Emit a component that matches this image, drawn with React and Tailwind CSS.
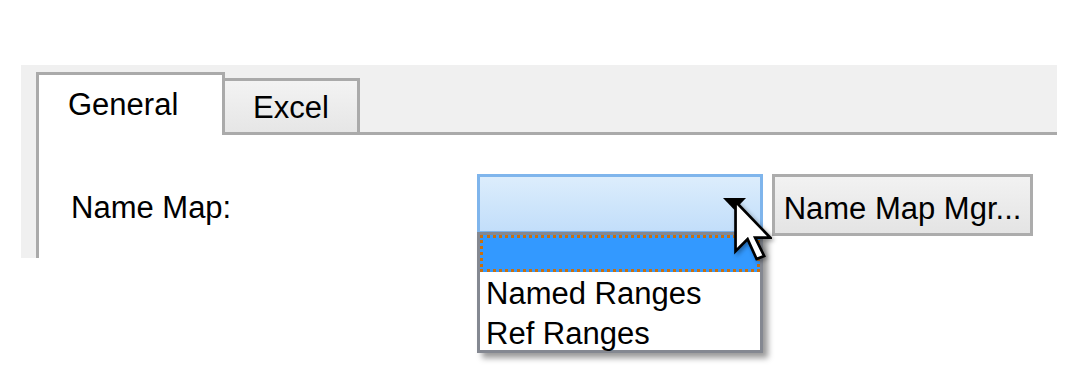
export default function App() {
  return (
    <div className="w-[1084px] h-[385px] bg-white overflow-hidden font-['Liberation_Sans',Arial,sans-serif] text-[31px] leading-[36px] text-black">
      <div className="mt-[65px] ml-[21px] w-[1036px] h-[193px] bg-[#f0f0f0] flex flex-col pl-[15px] pt-[7px]">
        {/* Tab strip */}
        <div className="flex items-end h-[63px]">
          <div className="h-[63px] w-[189px] border-[3px] border-b-0 border-[#aaaaaa] bg-white pl-[29px] pt-[12px]">
            General
          </div>
          <div className="h-[57px] w-[135px] border-t-[3px] border-r-[3px] border-b-[3px] border-[#aaaaaa] bg-gradient-to-b from-[#f3f3f3] to-[#e6e6e6] text-center pt-[9px]">
            Excel
          </div>
          <div className="flex-1 h-[3px] bg-[#aaaaaa]" />
        </div>
        {/* Panel */}
        <div className="flex-1 bg-white border-l-[3px] border-[#aaaaaa] pl-[32px] pt-[39px] flex items-start">
          <div className="w-[406px] pt-[16px]">Name Map:</div>
          <div className="relative w-[286px] h-[60px]">
            <div className="w-full h-full border-[3px] border-[#7fb5ec] bg-gradient-to-b from-[#dcedfc] to-[#c2defa]" />
            <svg className="absolute left-[246px] top-[24px]" width="23" height="12" viewBox="0 0 23 12">
              <polygon points="0,0 23,0 11.5,12" fill="#000" />
            </svg>
            {/* Dropdown list */}
            <div className="absolute left-0 top-[58px] w-[286px] h-[121px] bg-white border-[3px] border-[#848891] shadow-[5px_5px_6px_rgba(0,0,0,0.4)] z-10">
              <div className="h-[37px] bg-[#3399ff] border-[3px] border-dotted border-[#c8700f]" />
              <div className="h-[40px] leading-[40px] pl-[6px] mt-[2px]">Named Ranges</div>
              <div className="h-[36px] leading-[40px] pl-[6px]">Ref Ranges</div>
            </div>
            {/* Cursor */}
            <svg
              className="absolute left-[257px] top-[26px] z-20 drop-shadow-[2px_2px_2px_rgba(0,0,0,0.35)]"
              width="38"
              height="62"
              viewBox="0 0 12.6 20.6"
            >
              <polygon
                points="0.5,0.5 0.5,17 4.5,13 7.5,19.6 10,18.6 7,12.5 12,12.5"
                fill="#fff"
                stroke="#000"
                strokeWidth="0.9"
                strokeLinejoin="miter"
              />
            </svg>
          </div>
          <div className="ml-[9px] w-[261px] h-[62px] border-[3px] border-[#acacac] bg-gradient-to-b from-[#f2f2f2] to-[#e4e4e4] text-center pt-[14px] whitespace-nowrap">
            Name Map Mgr...
          </div>
        </div>
      </div>
    </div>
  );
}
